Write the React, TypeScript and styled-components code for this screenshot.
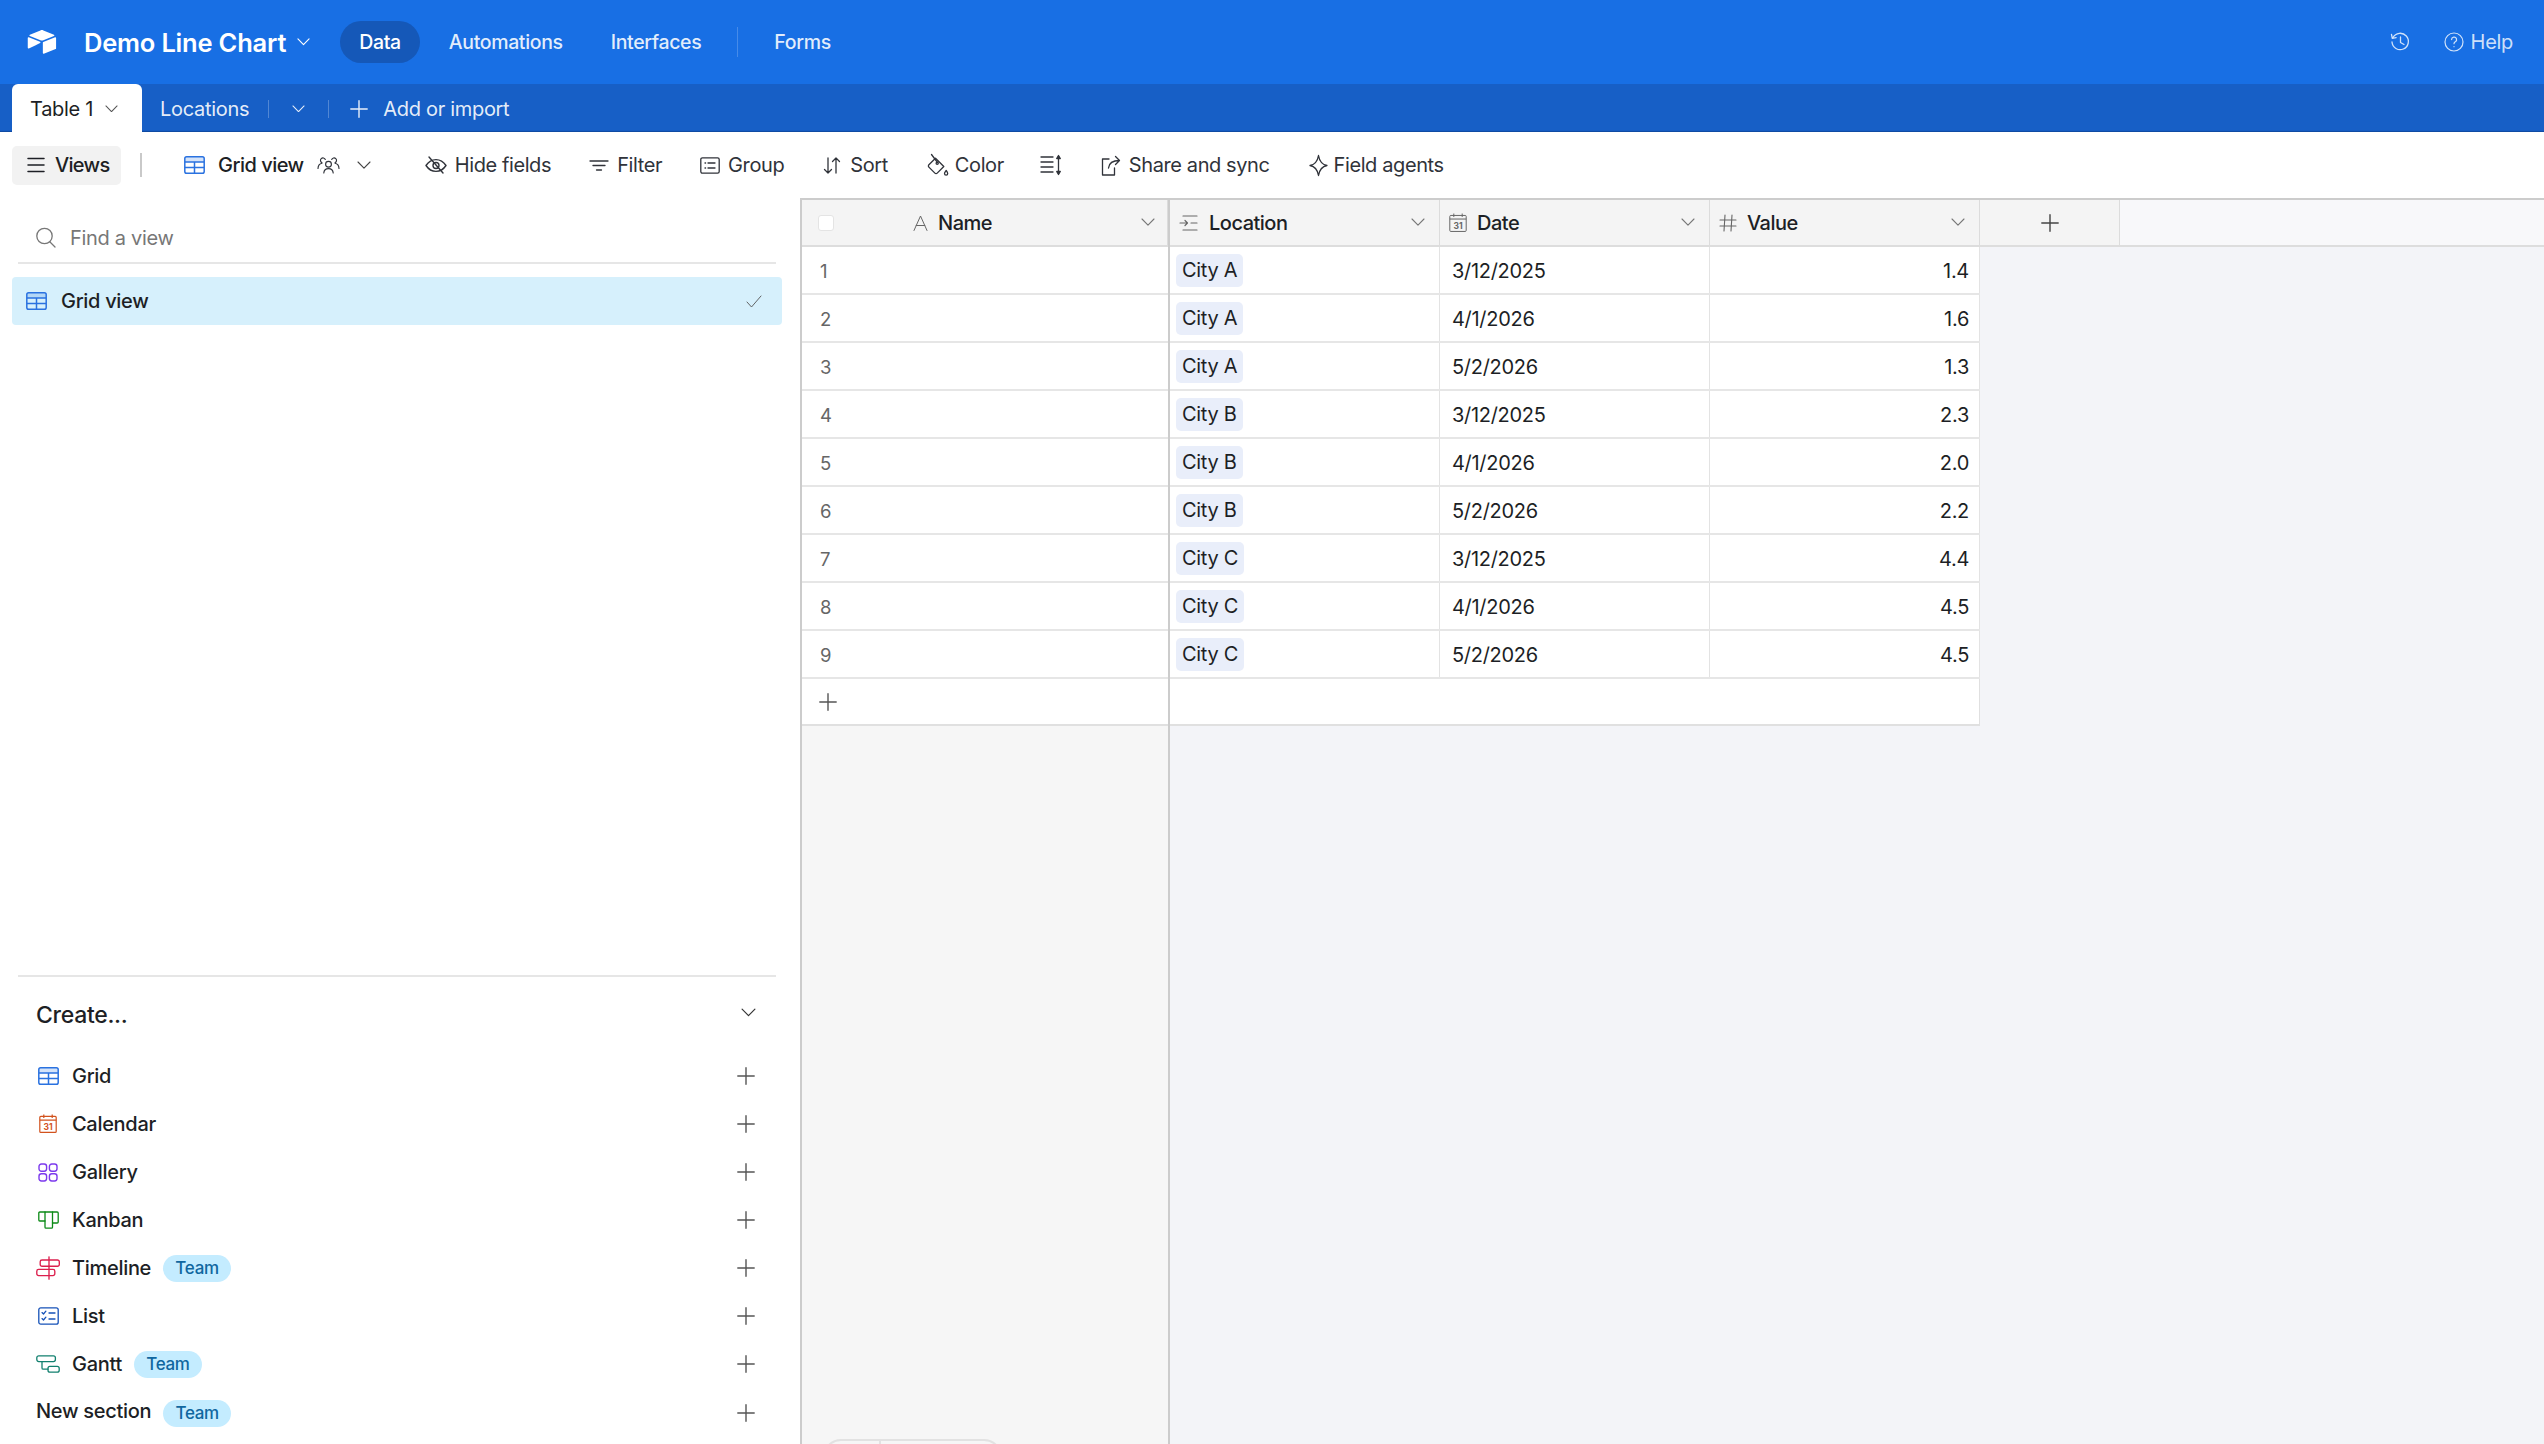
import React from "react";
import styled, { createGlobalStyle } from "styled-components";

const GlobalStyle = createGlobalStyle`
	html, body {
		margin: 0;
		padding: 0;
		background: #fff;
	}
	* {
		box-sizing: border-box;
	}
	body {
		font-family: Inter, "Liberation Sans", sans-serif;
		font-size: 20px;
		letter-spacing: -0.3px;
		color: #1d1f25;
		-webkit-font-smoothing: antialiased;
	}
`;

const Page = styled.div`
	width: 2544px;
	height: 1444px;
	display: flex;
	flex-direction: column;
	overflow: hidden;
	position: relative;
`;

const TopBar = styled.header`
	height: 84px;
	flex-shrink: 0;
	background: #186fe4;
	color: #fff;
	display: flex;
	align-items: center;
	padding: 0 31px 0 26px;
`;

const BaseTitle = styled.div`
	font-size: 25.5px;
	font-weight: 600;
	letter-spacing: -0.2px;
	margin-left: 26px;
`;

const TitleCaret = styled.span`
	display: inline-flex;
	margin: 0 30px 0 11px;
`;

const NavList = styled.nav`
	display: flex;
	align-items: center;
	gap: 10px;
`;

const NavItem = styled.div<{ $active?: boolean }>`
	height: 42px;
	padding: 0 19px;
	border-radius: 21px;
	display: flex;
	align-items: center;
	font-size: 19.5px;
	font-weight: 500;
	letter-spacing: -0.35px;
	color: ${p => (p.$active ? "#fff" : "rgba(255,255,255,0.88)")};
	background: ${p => (p.$active ? "#1558b8" : "transparent")};
`;

const NavDivider = styled.div`
	width: 1px;
	height: 30px;
	margin: 0 7px 0 7px;
	background: rgba(255, 255, 255, 0.2);
`;

const TopRight = styled.div`
	margin-left: auto;
	display: flex;
	align-items: center;
	color: rgba(255, 255, 255, 0.8);
	font-size: 20px;
`;

const HelpLink = styled.div`
	display: flex;
	align-items: center;
	gap: 7px;
	margin-left: 34px;
`;

const TabBar = styled.div`
	height: 48px;
	flex-shrink: 0;
	background: #175fc6;
	box-shadow: inset 0 -2px 1px -1px rgba(0, 30, 90, 0.35);
	color: #fff;
	display: flex;
	align-items: flex-end;
	padding-left: 12px;
`;

const ActiveTab = styled.div`
	width: 130px;
	height: 48px;
	background: #fff;
	color: #1d1f25;
	border-radius: 6px 6px 0 0;
	display: flex;
	align-items: center;
	justify-content: space-between;
	padding: 1px 24px 0 18px;
	font-size: 20px;
`;

const TabItems = styled.div`
	height: 48px;
	display: flex;
	align-items: center;
	color: rgba(255, 255, 255, 0.9);
	font-size: 20px;
	padding: 1px 0 0 18px;
`;

const TabDivider = styled.div<{ $ml?: number }>`
	width: 1px;
	height: 18px;
	margin-left: ${p => p.$ml ?? 0}px;
	background: rgba(255, 255, 255, 0.25);
`;

const TabCaret = styled.span`
	display: inline-flex;
	margin: 0 23px;
`;

const TabAdd = styled.div`
	display: flex;
	align-items: center;
	gap: 15px;
	margin-left: 21px;
`;

const Toolbar = styled.div`
	height: 66px;
	flex-shrink: 0;
	background: #fff;
	display: flex;
	align-items: center;
	padding-left: 12px;
	font-size: 20px;
	letter-spacing: -0.4px;
	color: #30333a;
`;

const ViewsButton = styled.div`
	width: 109px;
	height: 39px;
	border-radius: 5px;
	background: #f2f2f2;
	display: flex;
	align-items: center;
	gap: 10px;
	padding-left: 15px;
	color: #1d1f25;
	font-weight: 500;
	letter-spacing: -0.7px;
`;

const ToolDivider = styled.div`
	width: 2px;
	height: 24px;
	margin: 0 42px 0 19px;
	background: #c9c9c9;
`;

const ToolItem = styled.div<{ $gap?: number; $ml?: number }>`
	display: flex;
	align-items: center;
	gap: ${p => p.$gap ?? 8}px;
	margin-left: ${p => p.$ml ?? 0}px;
	white-space: nowrap;
`;

const ViewName = styled.span`
	font-weight: 500;
	letter-spacing: -0.5px;
	color: #1d1f25;
`;

const Body = styled.div`
	flex: 1;
	display: flex;
	min-height: 0;
`;

const Sidebar = styled.aside`
	width: 800px;
	flex-shrink: 0;
	background: #fff;
	display: flex;
	flex-direction: column;
	justify-content: space-between;
`;

const SearchRow = styled.div`
	height: 66px;
	margin: 0 24px 0 18px;
	padding: 15px 0 0 17px;
	border-bottom: 2px solid #e6e6e6;
	display: flex;
	align-items: center;
	gap: 14px;
	color: #777;
`;

const ViewRow = styled.div`
	height: 48px;
	margin: 13px 18px 0 12px;
	padding: 0 20px 0 14px;
	border-radius: 4px;
	background: #d6f0fc;
	display: flex;
	align-items: center;
	gap: 14px;
	color: #1d1f25;
	font-weight: 500;
`;

const CheckMark = styled.span`
	margin-left: auto;
	display: inline-flex;
	color: #555;
`;

const CreatePanel = styled.div`
	margin: 0 24px 0 18px;
	height: 469px;
	border-top: 2px solid #e6e6e6;
	display: flex;
	flex-direction: column;
`;

const CreateHeading = styled.div`
	height: 75px;
	display: flex;
	align-items: center;
	justify-content: space-between;
	padding: 0 20px 0 18px;
	font-size: 23px;
	font-weight: 500;
`;

const HeadingCaret = styled.span`
	display: inline-flex;
	margin-bottom: 4px;
`;

const CreateRow = styled.div<{ $extraTop?: number }>`
	height: 48px;
	flex-shrink: 0;
	margin-top: ${p => p.$extraTop ?? 0}px;
	display: flex;
	align-items: center;
	padding-left: 18px;
	padding-right: 21px;
	font-weight: 500;
	font-size: 20px;
	color: #1d1f25;
`;

const RaisedLabel = styled.span`
	margin-bottom: 4px;
`;

const CreateIcon = styled.span`
	width: 24px;
	margin-right: 12px;
	display: inline-flex;
	justify-content: center;
`;

const TeamBadge = styled.span`
	height: 27px;
	width: 68px;
	border-radius: 14px;
	background: #c4ecff;
	color: #10679f;
	font-size: 17px;
	font-weight: 500;
	display: inline-flex;
	align-items: center;
	justify-content: center;
	margin-left: 12px;
`;

const PlusEnd = styled.span`
	margin-left: auto;
	display: inline-flex;
`;

const GridArea = styled.main`
	flex: 1;
	display: flex;
	position: relative;
	background: #f3f4f8;
	min-width: 0;
`;

const FrozenPane = styled.div`
	width: 370px;
	flex-shrink: 0;
	background: #f6f6f6;
	border-left: 2px solid #cccccc;
	border-right: 2px solid #cccccc;
`;

const ScrollPane = styled.div`
	flex: 1;
	min-width: 0;
`;

const HeaderRow = styled.div`
	height: 49px;
	display: flex;
	background: #f8f8fa;
	border-top: 2px solid #cccccc;
	border-bottom: 2px solid #dddddd;
`;

const HeaderCell = styled.div<{ $width?: number; $frozen?: boolean }>`
	width: ${p => (p.$width ? `${p.$width}px` : "100%")};
	flex-shrink: 0;
	height: 100%;
	background: #f4f4f4;
	border-right: 1px solid #dcdcdc;
	display: flex;
	align-items: center;
	padding: ${p => (p.$frozen ? "0 12px 0 16px" : "0 14px 0 9px")};
	color: #1d1f25;
	font-size: 20px;
	font-weight: 500;
	letter-spacing: -0.5px;
`;

const HeaderLabel = styled.span`
	margin-left: 10px;
	flex: 1;
`;

const RowCheck = styled.span`
	width: 16px;
	height: 16px;
	border-radius: 3px;
	background: #fff;
	border: 1px solid #e4e4e4;
	margin-right: 79px;
`;

const AddFieldCell = styled.div`
	width: 140px;
	height: 100%;
	background: #f4f4f4;
	border-right: 1px solid #dcdcdc;
	display: flex;
	align-items: center;
	justify-content: center;
`;

const DataRow = styled.div`
	height: 48px;
	width: 810px;
	display: flex;
	background: #fff;
	border-bottom: 2px solid #e6e6e6;
`;

const FrozenRow = styled.div`
	height: 48px;
	background: #fff;
	border-bottom: 2px solid #e6e6e6;
	display: flex;
	align-items: center;
	padding: 1px 0 0 18px;
	color: #666;
	font-size: 18.5px;
`;

const AddRowFrozen = styled.div`
	height: 47px;
	background: #fff;
	border-bottom: 2px solid #e0e0e0;
	display: flex;
	align-items: center;
	padding-left: 17px;
`;

const AddRowEmpty = styled.div`
	height: 47px;
	width: 810px;
	background: #fff;
	border-bottom: 2px solid #e0e0e0;
	border-right: 1px solid #e0e0e0;
`;

const Cell = styled.div<{ $right?: boolean }>`
	width: 270px;
	flex-shrink: 0;
	display: flex;
	align-items: center;
	justify-content: ${p => (p.$right ? "flex-end" : "flex-start")};
	padding: ${p => (p.$right ? "1px 10px 0 0" : "1px 8px 0 12px")};
	border-right: 1px solid #e3e3e3;
	font-size: 20px;
	color: #1d1f25;
`;

const LocationCell = styled(Cell)`
	padding: 0 8px 0 6px;
`;

const Chip = styled.span`
	height: 33px;
	padding: 0 6px;
	border-radius: 5px;
	background: #e9eefa;
	display: inline-flex;
	align-items: center;
	font-size: 20px;
`;

const SummaryBar = styled.div`
	position: absolute;
	left: 23px;
	top: 1241px;
	width: 179px;
	height: 40px;
	background: #f6f6f6;
	border: 2px solid #e2e2e2;
	border-radius: 18px 18px 0 0;
	display: flex;
`;

const SummarySegment = styled.div`
	width: 56px;
	border-right: 2px solid #e2e2e2;
`;

type IconProps = { size?: number; color?: string; w?: number };

const Svg = (props: IconProps & { children: React.ReactNode; box?: string; h?: number }) => (
	<svg
		width={props.size ?? 22}
		height={props.h ?? props.size ?? 22}
		viewBox={props.box ?? "0 0 16 16"}
		fill="none"
		stroke={props.color ?? "currentColor"}
		strokeWidth={props.w ?? 1}
		strokeLinecap="round"
		strokeLinejoin="round"
		style={{ flexShrink: 0, display: "block" }}
	>
		{props.children}
	</svg>
);

const Logo = () => (
	<svg width="32" height="28" viewBox="0 0 200 170" fill="#fff" style={{ flexShrink: 0, display: "block" }}>
		<path d="M90 12.4 24.1 39.7c-3.7 1.5-3.6 6.7 0 8.2l66.3 26.2c5.8 2.3 12.3 2.3 18.1 0l66.2-26.2c3.7-1.5 3.7-6.7.1-8.2L108.8 12.4c-6-2.5-12.8-2.5-18.8 0" />
		<path d="M105.3 88.5v65.6c0 3.1 3.1 5.3 6 4.1l73.9-28.7c1.7-.7 2.8-2.3 2.8-4.1V59.8c0-3.1-3.1-5.3-6-4.1l-73.9 28.7c-1.7.6-2.8 2.2-2.8 4.1" />
		<path d="M88.1 91.8 66.2 102.4l-2.2 1.1-46.3 22.2c-2.9 1.4-6.7-.8-6.7-4V60.1c0-1.2.6-2.2 1.4-3 .4-.3.7-.6 1.1-.8 1.1-.7 2.7-.8 4-.3l70.2 27.8c3.5 1.4 3.8 6.4.4 8" />
	</svg>
);

const Chevron = ({ size = 14, color, w = 1.1 }: IconProps) => (
	<Svg size={size} h={size * 0.6} box="0 0 14 8.4" color={color} w={w}>
		<path d="M1 1l6 6.2L13 1" />
	</Svg>
);

const Plus = ({ size = 18, color, w = 1 }: IconProps) => (
	<Svg size={size} box="0 0 18 18" color={color} w={w * 1.4}>
		<path d="M9 .8v16.4M.8 9h16.4" />
	</Svg>
);

const GridIcon = ({ size = 21 }: IconProps) => (
	<svg width={size} height={size * 0.86} viewBox="0 0 21 18" fill="none" stroke="#2a72e0" strokeWidth="1.5" style={{ flexShrink: 0, display: "block" }}>
		<rect x="0.8" y="0.8" width="19.4" height="16.4" rx="1.8" />
		<rect x="1" y="1" width="19" height="5" fill="#2a72e0" fillOpacity="0.2" stroke="none" />
		<path d="M1 6h19M1 11.6h19M10.5 6v11" />
	</svg>
);

const CalendarIcon = ({ color, size = 18, w = 1.2 }: IconProps) => (
	<svg width={size} height={size * 1.06} viewBox="0 0 18 19" fill="none" stroke={color} strokeWidth={w} style={{ flexShrink: 0, display: "block" }}>
		<rect x="0.8" y="2.4" width="16.4" height="16" rx="1" />
		<path d="M0.8 6h16.4M4.8 0.5v3.4M13.2 0.5v3.4" />
		<text x="9" y="15.6" textAnchor="middle" fontSize="8.5" fontWeight="700" fontFamily="Inter, sans-serif" letterSpacing="0" fill={color} stroke="none">
			31
		</text>
	</svg>
);

const GalleryIcon = () => (
	<Svg size={20} box="0 0 20 19" h={19} color="#7c3aed" w={1.4}>
		<rect x="1" y="1" width="7.6" height="7.2" rx="2.4" />
		<rect x="11.4" y="1" width="7.6" height="7.2" rx="2.4" />
		<rect x="1" y="10.8" width="7.6" height="7.2" rx="2.4" />
		<rect x="11.4" y="10.8" width="7.6" height="7.2" rx="2.4" />
	</Svg>
);

const KanbanIcon = () => (
	<Svg size={21} box="0 0 21 18" h={18} color="#0c8a17" w={1.3}>
		<path d="M7 1H1.8a1 1 0 0 0-1 1v7a1 1 0 0 0 1 1H7" />
		<path d="M14.5 1h4.7a1 1 0 0 1 1 1v9a1 1 0 0 1-1 1h-4.7" />
		<path d="M7 1h7.5v15.2a1 1 0 0 1-1 1H8a1 1 0 0 1-1-1z" />
	</Svg>
);

const TimelineIcon = () => (
	<Svg size={24} box="0 0 24 24" color="#dc1f4d" w={1.35}>
		<path d="M13 0.8v22.4" />
		<path d="M13 4H21.5a1.8 1.8 0 0 1 1.8 1.8v2.6a1.8 1.8 0 0 1-1.8 1.8H6a1.8 1.8 0 0 1-1.8-1.8V5.8A1.8 1.8 0 0 1 6 4z" />
		<path d="M13 13.4H2.6a1.8 1.8 0 0 0-1.8 1.8v2.6a1.8 1.8 0 0 0 1.8 1.8H17a1.8 1.8 0 0 0 1.8-1.8v-2.6a1.8 1.8 0 0 0-1.8-1.8z" />
	</Svg>
);

const ListIcon = () => (
	<Svg size={21} box="0 0 21 18" h={18} color="#1652b8" w={1.3}>
		<rect x="0.8" y="0.8" width="19.4" height="16.4" rx="2" />
		<path d="M4 5.6l1.5 1.4 2.4-2.8M4 11.6l1.5 1.4 2.4-2.8M11 6h6M11 12h6" />
	</Svg>
);

const GanttIcon = () => (
	<Svg size={24} box="0 0 24 18" h={18} color="#12806f" w={1.3}>
		<rect x="0.8" y="0.8" width="18.6" height="5.8" rx="2" />
		<rect x="12" y="11.4" width="11.2" height="5.8" rx="2" />
		<path d="M6 6.6v6.4a1.2 1.2 0 0 0 1.2 1.2H12" />
	</Svg>
);

const PeopleIcon = () => (
	<Svg size={23} box="0 0 23 17" h={17} w={1.15}>
		<circle cx="11.5" cy="7.2" r="2.9" />
		<path d="M6.8 16c.2-2.8 2-4.4 4.7-4.4s4.5 1.6 4.7 4.4" />
		<path d="M8.3 2.5A2.5 2.5 0 1 0 5 5.7M14.7 2.5A2.5 2.5 0 1 1 18 5.7M1 11.5c.1-3 1.6-4.9 4-5.3M22 11.5c-.1-3-1.6-4.9-4-5.3" />
	</Svg>
);

const ToolGlyph = {
	menu: (
		<Svg size={18} box="0 0 18 16" h={16} w={1.5}>
			<path d="M1 1.5h16M1 8h16M1 14.5h16" />
		</Svg>
	),
	hide: (
		<Svg size={22} box="0 0 22 18" h={18} w={1.4}>
			<path d="M1 9.5C3.6 5.6 6.9 3.6 11 3.6s7.4 2 10 5.9c-2.6 3.9-5.9 5.9-10 5.9s-7.4-2-10-5.9z" />
			<circle cx="11" cy="9.5" r="3" />
			<path d="M4 1l14 16" />
		</Svg>
	),
	filter: (
		<Svg size={20} box="0 0 20 11" h={11} w={1.3}>
			<path d="M1 1h18M4 5.5h12M7.5 10h5" />
		</Svg>
	),
	group: (
		<Svg size={20} box="0 0 20 17" h={17} w={1.3}>
			<rect x="0.8" y="0.8" width="18.4" height="15.4" rx="1.6" />
			<path d="M5 6h.6M8 6h7M5 11h.6M8 11h7" />
		</Svg>
	),
	sort: (
		<Svg size={18} box="0 0 18 17" h={17} w={1.3}>
			<path d="M5 1v15M1.5 12.5L5 16l3.5-3.5M13 16V1M9.5 4.5L13 1l3.5 3.5" />
		</Svg>
	),
	color: (
		<Svg size={24} box="0 0 24 24" w={1.3}>
			<path d="M10.5 5.2l8.3 8.3-6.6 6.6a1.6 1.6 0 0 1-2.3 0l-6-6a1.6 1.6 0 0 1 0-2.3z" />
			<path d="M6.5 1.5l6 8" />
			<circle cx="12.2" cy="10.3" r="1.1" />
			<path d="M21.2 17.5c1 1.4 1.5 2.2 1.5 3a1.6 1.6 0 0 1-3.2 0c0-.8.7-1.6 1.7-3z" />
		</Svg>
	),
	rowHeight: (
		<Svg size={22} box="0 0 22 22" w={1.3}>
			<path d="M1 3h12M1 8h12M1 13h12M1 18h12" />
			<path d="M18.5 3v16" />
			<path d="M18.5 1.5l-1.8 3h3.6zM18.5 20.5l-1.8-3h3.6z" fill="currentColor" />
		</Svg>
	),
	share: (
		<Svg size={20} box="0 0 20 21" h={21} w={1.3}>
			<path d="M8 4H1.5v16h12v-7" />
			<path d="M7.5 13C8 8 11 5.5 18.5 5.5M14.5 1.5l4 4-4 4" />
		</Svg>
	),
	sparkle: (
		<Svg size={19} box="0 0 19 23" h={23} w={1.3}>
			<path d="M9.5 1.5c1 6 3 9 8.5 10-5.5 1-7.5 4-8.5 10-1-6-3-9-8.5-10 5.5-1 7.5-4 8.5-10z" />
		</Svg>
	),
	search: (
		<Svg size={21} box="0 0 21 21" w={1.3}>
			<circle cx="9.5" cy="9" r="7.7" />
			<path d="M15 15l5 5" />
		</Svg>
	),
	check: (
		<Svg size={16} box="0 0 16 13" h={13} w={0.9}>
			<path d="M1 7l4.5 5L15 1" />
		</Svg>
	),
	history: (
		<Svg size={20} box="0 0 20 20" w={1.3}>
			<path d="M3 5.5A8.2 8.2 0 1 1 2 10" />
			<path d="M1.5 2.5l.8 3.8 3.8-.6" />
			<path d="M10.5 5v5.5l3.5 2" />
		</Svg>
	),
	help: (
		<Svg size={20} box="0 0 20 20" w={1.2}>
			<circle cx="10" cy="10" r="9" />
			<path d="M7.6 7.6a2.5 2.5 0 1 1 3.7 2.2c-.8.5-1.3.9-1.3 1.9" />
			<path d="M10 14.6v.1" />
		</Svg>
	),
};

const FieldGlyph = {
	name: (
		<Svg size={15} box="0 0 15 16" h={16} color="#666" w={1}>
			<path d="M1 15.5L7.5 1 14 15.5M3.2 10.5h8.6" />
		</Svg>
	),
	location: (
		<Svg size={20} box="0 0 20 16" h={16} color="#666" w={1.2}>
			<path d="M4 1h14M1 8h7M6 5.5L8.5 8 6 10.5M12 8h6M4 15h14" />
		</Svg>
	),
	value: (
		<Svg size={18} box="0 0 18 18" color="#666" w={1.1}>
			<path d="M6 1L5 17M13 1l-1 16M1 6h16M1 12h16" />
		</Svg>
	),
};

const rows = [
	{ id: 1, city: "City A", date: "3/12/2025", value: "1.4" },
	{ id: 2, city: "City A", date: "4/1/2026", value: "1.6" },
	{ id: 3, city: "City A", date: "5/2/2026", value: "1.3" },
	{ id: 4, city: "City B", date: "3/12/2025", value: "2.3" },
	{ id: 5, city: "City B", date: "4/1/2026", value: "2.0" },
	{ id: 6, city: "City B", date: "5/2/2026", value: "2.2" },
	{ id: 7, city: "City C", date: "3/12/2025", value: "4.4" },
	{ id: 8, city: "City C", date: "4/1/2026", value: "4.5" },
	{ id: 9, city: "City C", date: "5/2/2026", value: "4.5" },
];

const createItems = [
	{ label: "Grid", icon: <GridIcon /> },
	{ label: "Calendar", icon: <CalendarIcon color="#d2521d" /> },
	{ label: "Gallery", icon: <GalleryIcon /> },
	{ label: "Kanban", icon: <KanbanIcon /> },
	{ label: "Timeline", icon: <TimelineIcon />, team: true },
	{ label: "List", icon: <ListIcon /> },
	{ label: "Gantt", icon: <GanttIcon />, team: true },
];

const columns = [
	{ label: "Location", icon: FieldGlyph.location },
	{ label: "Date", icon: <CalendarIcon color="#666" size={18} w={1} /> },
	{ label: "Value", icon: FieldGlyph.value },
];

export default function App() {
	return (
		<Page>
			<GlobalStyle />
			<TopBar>
				<Logo />
				<BaseTitle>Demo Line Chart</BaseTitle>
				<TitleCaret>
					<Chevron size={13} w={1.2} />
				</TitleCaret>
				<NavList>
					<NavItem $active>Data</NavItem>
					<NavItem>Automations</NavItem>
					<NavItem>Interfaces</NavItem>
					<NavDivider />
					<NavItem>Forms</NavItem>
				</NavList>
				<TopRight>
					{ToolGlyph.history}
					<HelpLink>
						{ToolGlyph.help}
						Help
					</HelpLink>
				</TopRight>
			</TopBar>
			<TabBar>
				<ActiveTab>
					Table 1
					<Chevron size={13} color="#555" />
				</ActiveTab>
				<TabItems>
					Locations
					<TabDivider $ml={19} />
					<TabCaret>
						<Chevron size={13} />
					</TabCaret>
					<TabDivider />
					<TabAdd>
						<Plus />
						Add or import
					</TabAdd>
				</TabItems>
			</TabBar>
			<Toolbar>
				<ViewsButton>
					{ToolGlyph.menu}
					Views
				</ViewsButton>
				<ToolDivider />
				<ToolItem $gap={13}>
					<GridIcon />
					<ViewName>Grid view</ViewName>
					<PeopleIcon />
				</ToolItem>
				<ToolItem $ml={17}>
					<Chevron size={14} color="#444" />
				</ToolItem>
				<ToolItem $ml={54}>{ToolGlyph.hide}Hide fields</ToolItem>
				<ToolItem $ml={38}>{ToolGlyph.filter}Filter</ToolItem>
				<ToolItem $ml={38}>{ToolGlyph.group}Group</ToolItem>
				<ToolItem $ml={39} $gap={9}>
					{ToolGlyph.sort}Sort
				</ToolItem>
				<ToolItem $ml={37} $gap={6}>
					{ToolGlyph.color}Color
				</ToolItem>
				<ToolItem $ml={36}>{ToolGlyph.rowHeight}</ToolItem>
				<ToolItem $ml={39} $gap={8}>
					{ToolGlyph.share}Share and sync
				</ToolItem>
				<ToolItem $ml={39} $gap={6}>
					{ToolGlyph.sparkle}Field agents
				</ToolItem>
			</Toolbar>
			<Body>
				<Sidebar>
					<div>
						<SearchRow>
							{ToolGlyph.search}
							Find a view
						</SearchRow>
						<ViewRow>
							<GridIcon />
							Grid view
							<CheckMark>{ToolGlyph.check}</CheckMark>
						</ViewRow>
					</div>
					<CreatePanel>
						<CreateHeading>
							Create...
							<HeadingCaret>
								<Chevron size={15} color="#333" />
							</HeadingCaret>
						</CreateHeading>
						{createItems.map(item => (
							<CreateRow key={item.label}>
								<CreateIcon>{item.icon}</CreateIcon>
								{item.label}
								{item.team && <TeamBadge>Team</TeamBadge>}
								<PlusEnd>
									<Plus color="#555" />
								</PlusEnd>
							</CreateRow>
						))}
						<CreateRow $extraTop={1}>
							<RaisedLabel>New section</RaisedLabel>
							<TeamBadge>Team</TeamBadge>
							<PlusEnd>
								<Plus color="#555" />
							</PlusEnd>
						</CreateRow>
					</CreatePanel>
				</Sidebar>
				<GridArea>
					<FrozenPane>
						<HeaderRow>
							<HeaderCell $frozen>
								<RowCheck />
								{FieldGlyph.name}
								<HeaderLabel>Name</HeaderLabel>
								<Chevron size={14} color="#777" />
							</HeaderCell>
						</HeaderRow>
						{rows.map(row => (
							<FrozenRow key={row.id}>{row.id}</FrozenRow>
						))}
						<AddRowFrozen>
							<Plus color="#555" />
						</AddRowFrozen>
					</FrozenPane>
					<ScrollPane>
						<HeaderRow>
							{columns.map(col => (
								<HeaderCell key={col.label} $width={270}>
									{col.icon}
									<HeaderLabel>{col.label}</HeaderLabel>
									<Chevron size={14} color="#777" />
								</HeaderCell>
							))}
							<AddFieldCell>
								<Plus color="#444" />
							</AddFieldCell>
						</HeaderRow>
						{rows.map(row => (
							<DataRow key={row.id}>
								<LocationCell>
									<Chip>{row.city}</Chip>
								</LocationCell>
								<Cell>{row.date}</Cell>
								<Cell $right>{row.value}</Cell>
							</DataRow>
						))}
						<AddRowEmpty />
					</ScrollPane>
					<SummaryBar>
						<SummarySegment />
					</SummaryBar>
				</GridArea>
			</Body>
		</Page>
	);
}
